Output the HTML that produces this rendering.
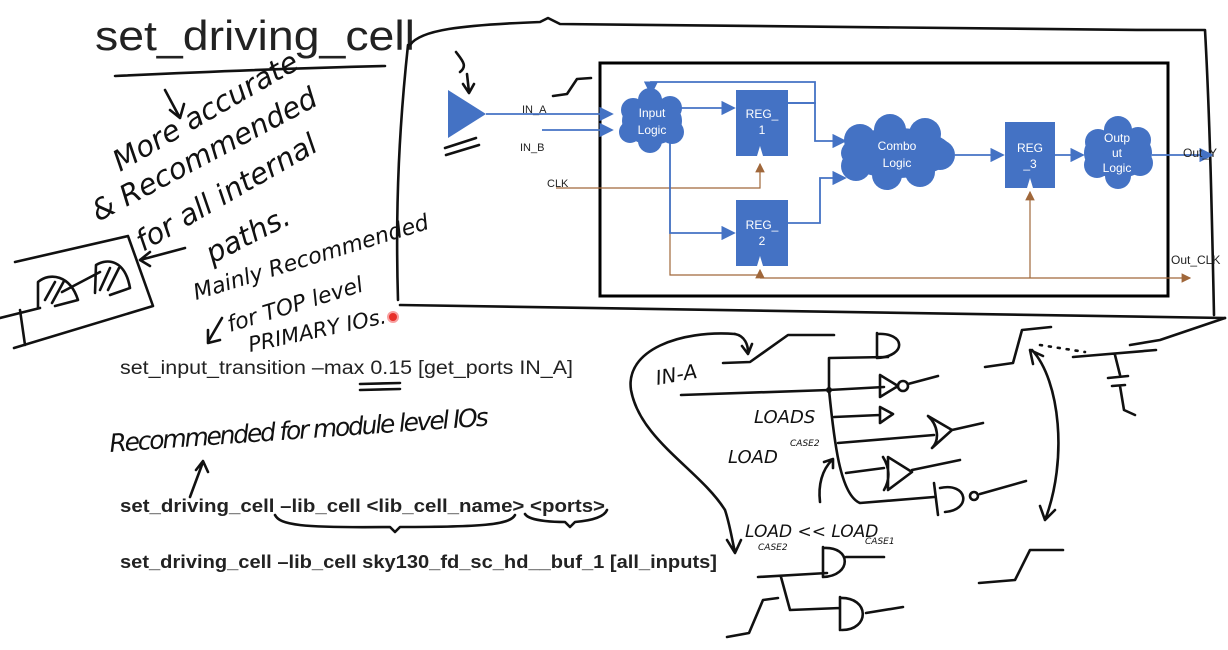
<!DOCTYPE html>
<html><head><meta charset="utf-8"><style>
html,body{margin:0;padding:0;background:#fff;}
svg{display:block}
.hw{font-family:"DejaVu Sans",sans-serif;fill:#111;font-style:oblique;font-weight:200}
.pen{fill:none;stroke:#111;stroke-width:2.6;stroke-linecap:round;stroke-linejoin:round}
.bl{fill:none;stroke:#4472c4;stroke-width:1.8}
.br{fill:none;stroke:#a0673a;stroke-width:1.2}
.ty{font-family:"Liberation Sans",sans-serif;fill:#222}
</style></head><body>
<svg width="1228" height="650" viewBox="0 0 1228 650" xmlns="http://www.w3.org/2000/svg">
<defs>
<marker id="ab" markerWidth="8" markerHeight="8" refX="7" refY="4" orient="auto"><path d="M0,0 L8,4 L0,8 z" fill="#4472c4"/></marker>
<marker id="ar" markerWidth="8" markerHeight="8" refX="7" refY="4" orient="auto"><path d="M0,0 L8,4 L0,8 z" fill="#a0673a"/></marker>
</defs>
<rect width="1228" height="650" fill="#fff"/>
<text x="95" y="50" class="ty" font-size="42" textLength="320" lengthAdjust="spacingAndGlyphs">set_driving_cell</text>
<path class="pen" d="M115,76 C200,72 300,68 385,66"/>
<path class="pen" d="M410,45 C420,30 460,25 540,22 L548,18 L560,24 C800,28 1000,30 1205,30 C1210,120 1212,220 1214,315 M398,300 C395,200 400,120 408,45 M400,305 C600,308 900,312 1225,318"/>
<rect x="600" y="63" width="568" height="233" fill="#fff" stroke="#000" stroke-width="3"/>
<polygon points="448,90 486,114 448,138" fill="#4472c4"/>
<path class="pen" d="M445,148 L476,138 M446,155 L479,145 M456,52 C462,60 468,66 460,72 M467,74 L469,92 M463,84 L469,93 L474,84"/>
<path class="pen" stroke-width="2" d="M553,96 L567,94 L577,79 L591,78"/>
<text x="522" y="113" class="ty" font-size="11">IN_A</text>
<text x="520" y="151" class="ty" font-size="11">IN_B</text>
<text x="547" y="187" class="ty" font-size="11">CLK</text>
<path class="bl" d="M486,114 L612,114" marker-end="url(#ab)"/>
<path class="bl" d="M542,130 L612,130" marker-end="url(#ab)"/>
<path class="br" d="M556,188 L760,188 L760,164" marker-end="url(#ar)"/>
<path class="br" d="M670,188 L670,275 L760,275 L760,270" marker-end="url(#ar)"/>
<path class="br" d="M760,278 L1190,278" marker-end="url(#ar)"/>
<path class="br" d="M1030,278 L1030,192" marker-end="url(#ar)"/>
<g fill="#4472c4">
<ellipse cx="652" cy="121" rx="30" ry="24"/><circle cx="633" cy="110" r="12"/><circle cx="650" cy="100" r="12"/><circle cx="670" cy="108" r="12"/><circle cx="672" cy="132" r="12"/><circle cx="650" cy="141" r="12"/><circle cx="630" cy="132" r="11"/>
<ellipse cx="897" cy="153" rx="56" ry="25"/><circle cx="860" cy="140" r="16"/><circle cx="890" cy="130" r="16"/><circle cx="925" cy="134" r="16"/><circle cx="940" cy="155" r="15"/><circle cx="920" cy="172" r="15"/><circle cx="887" cy="175" r="15"/><circle cx="856" cy="166" r="15"/>
<ellipse cx="1118" cy="153" rx="34" ry="25"/><circle cx="1098" cy="142" r="13"/><circle cx="1118" cy="130" r="14"/><circle cx="1138" cy="140" r="13"/><circle cx="1140" cy="163" r="13"/><circle cx="1118" cy="176" r="13"/><circle cx="1097" cy="165" r="13"/>
<rect x="736" y="90" width="52" height="66"/><rect x="736" y="200" width="52" height="66"/><rect x="1005" y="122" width="50" height="66"/>
</g>
<g fill="#fff"><polygon points="757,156 763,156 760,146"/><polygon points="757,266 763,266 760,256"/><polygon points="1027,188 1033,188 1030,178"/></g>
<g class="ty" font-size="12" text-anchor="middle">
<text x="652" y="117" style="fill:#fff">Input</text><text x="652" y="134" style="fill:#fff">Logic</text>
<text x="762" y="118" style="fill:#fff">REG_</text><text x="762" y="134" style="fill:#fff">1</text>
<text x="762" y="229" style="fill:#fff">REG_</text><text x="762" y="245" style="fill:#fff">2</text>
<text x="897" y="150" style="fill:#fff">Combo</text><text x="897" y="167" style="fill:#fff">Logic</text>
<text x="1030" y="152" style="fill:#fff">REG</text><text x="1030" y="168" style="fill:#fff">_3</text>
<text x="1117" y="142" style="fill:#fff">Outp</text><text x="1117" y="157" style="fill:#fff">ut</text><text x="1117" y="172" style="fill:#fff">Logic</text>
</g>
<path class="bl" d="M676,108 L734,108" marker-end="url(#ab)"/>
<path class="bl" d="M788,103 L815,103 L815,82 L651,82 L651,94" marker-end="url(#ab)"/>
<path class="bl" d="M788,103 L815,103 L815,141 L845,141" marker-end="url(#ab)"/>
<path class="bl" d="M670,131 L670,233 L734,233" marker-end="url(#ab)"/>
<path class="bl" d="M788,223 L820,223 L820,178 L845,178" marker-end="url(#ab)"/>
<path class="bl" d="M955,155 L1003,155" marker-end="url(#ab)"/>
<path class="bl" d="M1055,155 L1083,155" marker-end="url(#ab)"/>
<path class="bl" d="M1152,155 L1212,155" marker-end="url(#ab)"/>
<text x="1183" y="157" class="ty" font-size="12">Out_Y</text>
<text x="1171" y="264" class="ty" font-size="12">Out_CLK</text>
<path class="pen" d="M165,90 L180,118 M170,110 L180,118 L184,104"/>
<g class="hw" font-size="29">
<text transform="translate(120,172) rotate(-30)">More  accurate</text>
<text transform="translate(98,222) rotate(-28)">&amp; Recommended</text>
<text transform="translate(143,252) rotate(-30)">for all  internal</text>
<text transform="translate(212,264) rotate(-27)">paths.</text>
<text font-size="22" transform="translate(196,300) rotate(-17)">Mainly Recommended</text>
<text font-size="22" transform="translate(230,332) rotate(-17)">for TOP level</text>
<text font-size="21" transform="translate(250,352) rotate(-12)">PRIMARY IOs.</text>
</g>
<circle cx="393" cy="317" r="5" fill="#e8302a" stroke="#f8a0a0" stroke-width="2"/>
<path class="pen" d="M222,318 L208,342 M208,330 L208,343 L220,340"/>
<path class="pen" d="M15,262 L128,236 L153,306 L14,348 M0,318 L40,308 M20,310 L25,345"/>
<path class="pen" d="M38,308 L38,282 C50,272 70,275 78,300 L55,306 M95,293 L96,265 C108,258 125,260 130,288 L110,295 M62,292 L100,272 M140,260 L185,248 M140,260 L150,252 M140,260 L150,266"/>
<path class="pen" stroke-width="1.4" d="M45,300 L55,282 M52,303 L64,281 M100,290 L110,268 M108,290 L119,268"/>
<text x="120" y="374" class="ty" font-size="19" textLength="453" lengthAdjust="spacingAndGlyphs">set_input_transition –max 0.15 [get_ports IN_A]</text>
<path class="pen" d="M360,384 L400,383 M360,390 L400,389"/>
<text class="hw" font-size="25" transform="translate(110,452) rotate(-4)" textLength="380">Recommended for module level IOs</text>
<path class="pen" d="M190,497 L203,462 M196,470 L203,461 L208,472"/>
<text x="120" y="512" class="ty" font-size="18.5" font-weight="bold" textLength="485" lengthAdjust="spacingAndGlyphs">set_driving_cell –lib_cell &lt;lib_cell_name&gt; &lt;ports&gt;</text>
<path class="pen" d="M275,515 C280,525 300,528 390,527 L395,532 L400,527 C480,527 510,525 515,515 M525,514 C530,522 560,522 565,522 L570,527 L575,522 C598,520 605,515 607,510"/>
<text x="120" y="568" class="ty" font-size="18.5" font-weight="bold" textLength="597" lengthAdjust="spacingAndGlyphs">set_driving_cell –lib_cell sky130_fd_sc_hd__buf_1 [all_inputs]</text>
<text class="hw" font-size="20" transform="translate(657,385) rotate(-10)">IN-A</text>
<path class="pen" d="M723,363 L750,362 L788,335 L834,335"/>
<path class="pen" d="M735,334 C745,336 748,345 748,352 M742,346 L748,354 L752,344"/>
<path class="pen" d="M681,395 L829,390 L884,387 M829,358 L829,390 C834,440 840,495 860,503 L934,497 M829,358 L888,357"/>
<circle cx="829" cy="390" r="3" fill="#111"/>
<path class="pen" d="M877,333 L877,358 M877,334 C905,332 908,356 877,358"/>
<path class="pen" d="M880,375 L880,397 L898,386 Z M898,386 m0,0 a5,5 0 1 0 10,0 a5,5 0 1 0 -10,0 M908,384 L938,376"/>
<path class="pen" d="M834,417 L880,415 M880,407 L880,423 L893,414 Z"/>
<path class="pen" d="M838,443 L934,435 M928,416 C938,425 940,440 932,448 M928,416 L952,430 L932,448 M952,430 L983,423"/>
<path class="pen" d="M846,473 L884,468 M883,457 C890,468 890,480 884,490 M888,457 L912,472 L888,490 Z M912,470 L960,460"/>
<path class="pen" d="M934,483 L938,515 M940,488 C968,482 972,510 945,512 M970,496 a4,4 0 1 0 8,0 a4,4 0 1 0 -8,0 M980,494 L1026,481"/>
<text class="hw" font-size="18" x="754" y="423">LOADS</text>
<text class="hw" font-size="18" x="728" y="463">LOAD</text>
<text class="hw" font-size="9" x="790" y="446">CASE2</text>
<path class="pen" d="M820,502 C818,485 822,470 832,460 M824,462 L833,459 L833,468"/>
<path class="pen" d="M735,334 C680,330 625,350 631,390 C640,440 700,470 725,510 C730,525 732,540 735,552 M727,540 L735,553 L741,540"/>
<text class="hw" font-size="17" x="745" y="537">LOAD &lt;&lt; LOAD</text>
<text class="hw" font-size="9" x="758" y="550">CASE2</text><text class="hw" font-size="9" x="865" y="544">CASE1</text>
<path class="pen" d="M758,577 L827,573 M823,547 L823,577 M823,548 C852,546 852,576 823,577 M846,557 L884,557 M781,577 L790,610 L840,608 M840,597 L840,630 M840,598 C870,597 870,630 842,630 M866,613 L903,607"/>
<path class="pen" d="M727,637 L749,633 L763,600 L778,598"/>
<path class="pen" d="M979,583 L1015,580 L1030,550 L1063,550"/>
<path class="pen" d="M985,367 L1013,363 L1022,330 L1051,327"/>
<path class="pen" d="M1032,350 C1060,380 1068,460 1045,520 M1030,350 L1033,364 M1030,350 L1043,356 M1045,520 L1040,506 M1045,520 L1055,510"/>
<path class="pen" stroke-width="1.5" stroke-dasharray="2,7" d="M1040,345 L1085,352"/>
<path class="pen" d="M1073,357 L1156,350 M1130,345 L1160,340 L1225,318 M1115,355 L1120,375 M1108,378 L1128,376 M1112,386 L1125,385 M1120,386 L1124,410 L1135,415"/>
</svg>
</body></html>
